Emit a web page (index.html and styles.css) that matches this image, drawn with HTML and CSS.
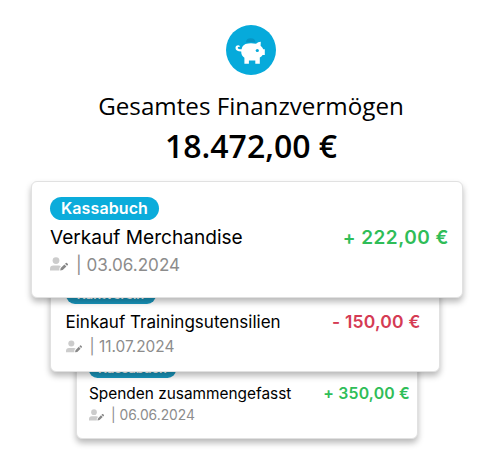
FILE: index.html
```html
<!DOCTYPE html>
<html lang="de">
<head>
<meta charset="utf-8">
<title>Finanzvermögen</title>
<link rel="stylesheet" href="styles.css">
</head>
<body>
<svg class="defs" width="0" height="0" aria-hidden="true">
  <symbol id="user-edit" viewBox="0 0 18 14">
    <circle cx="6" cy="3.6" r="3.4" fill="#ccc"/>
    <path d="M0 13.5v-1.6Q0 8.6 3.4 8.6h5.2q1.4 0 2.3.7L9.4 11v2.5z" fill="#ccc"/>
    <path d="M10.2 13.6l.5-2.5 3.7-3.7 2 2-3.7 3.700zM15 6.800l.9-.9q.5-.4 1 0l1 1q.4.5 0 1l-.9.9z" fill="#888"/>
  </symbol>
</svg>
<main class="overview">
  <svg class="logo" viewBox="0 0 50 50">
    <circle cx="25" cy="25" r="25" fill="#06aadb"/>
    <path d="M20 17.500q0-4.300 4.700-4.300t4.700 4.300q-4.700-1-9.400 0z" fill="#0795c4"/>
    <path d="M19.500 19q5-1.500 10.500-.2 2-2 4.800-2.100l-.2 4.100q2 1.500 2.700 3.500h1.500v5.600h-2.200q-1 1.500-2.800 2.600v6.200h-4.500v-3.300h-6.400v3.300h-4.500v-5.900q-3.200-2-3.200-6.200-5.700-.3-5.700-3.700 0-2.700 2.700-2.700 1.800 0 1.900 1.600-2.600-.3-2.400 1.100.3 1.300 3.900 1.300Q16.200 20.500 19.500 19z" fill="#fff"/>
    <circle cx="31.300" cy="25.500" r="1.600" fill="#06aadb"/>
  </svg>
  <h1 class="title">Gesamtes Finanzvermögen</h1>
  <p class="total">18.472,00 €</p>
  <section class="card card-front">
    <span class="badge">Kassabuch</span>
    <div class="row"><span class="name">Verkauf Merchandise</span><strong class="amount plus">+ 222,00 €</strong></div>
    <div class="meta"><svg class="icon"><use href="#user-edit"/></svg><span class="date">| 03.06.2024</span></div>
  </section>
  <section class="card card-middle">
    <span class="badge">Kantverein</span>
    <div class="row"><span class="name">Einkauf Trainingsutensilien</span><strong class="amount minus">- 150,00 €</strong></div>
    <div class="meta"><svg class="icon"><use href="#user-edit"/></svg><span class="date">| 11.07.2024</span></div>
  </section>
  <section class="card card-back">
    <span class="badge">Kassabuch</span>
    <div class="row"><span class="name">Spenden zusammengefasst</span><strong class="amount plus">+ 350,00 €</strong></div>
    <div class="meta"><svg class="icon"><use href="#user-edit"/></svg><span class="date">| 06.06.2024</span></div>
  </section>
</main>
</body>
</html>
```
FILE: styles.css
```css
* { box-sizing: border-box; }
body { margin: 0; background: #fff; color: #000; font-family: Inter, sans-serif; }
.defs { display: none; }
.overview { display: flex; flex-direction: column; align-items: center; width: 500px; height: 459px; padding-top: 25px; }
.logo { width: 50px; height: 50px; flex: none; margin-left: 2px; }
.title { margin: 14px 0 0 2px; font: 400 24.200px/34px "Open Sans", sans-serif; white-space: nowrap; }
.total { margin: 3px 0 0 2px; font: 600 32px/40px "Open Sans", sans-serif; white-space: nowrap; }
.card { position: relative; flex: none; display: flex; flex-direction: column; align-items: flex-start; background: #fff; border: 1px solid #e1e1e1; border-radius: 6px; box-shadow: 0 4px 6px rgba(0,0,0,.28); white-space: nowrap; }
.card-front { z-index: 3; width: 432px; height: 117px; margin: 15px 6px 0 0; padding: 15px 14px 0 18px; }
.card-middle { z-index: 2; width: 390px; height: 100px; margin: -26px 11px 0 0; padding: 13px 18px 0 15px; }
.card-back { z-index: 1; width: 342px; height: 90px; margin: -23px 6px 0 0; padding: 11px 7px 0 12px; }
.badge { display: flex; align-items: center; justify-content: center; background: #0bacdb; color: #fff; border-radius: 20px; font-weight: 600; }
.row { display: flex; justify-content: space-between; align-items: center; width: 100%; }
.amount { font-weight: 600; }
.plus { color: #2fbd58; }
.minus { color: #d53b54; }
.meta { display: flex; align-items: center; color: #8c8c8c; }
.icon { flex: none; }
.card-front .badge { width: 109px; height: 23px; padding-bottom: 1px; font-size: 16px; letter-spacing: .1px; }
.card-front .row { height: 26px; margin-top: 4px; }
.card-front .name { font-size: 19.100px; }
.card-front .amount { font-size: 19px; letter-spacing: .5px; margin-right: -1px; }
.card-front .meta { margin-top: 2px; height: 24px; font-size: 17.100px; }
.card-front .icon { width: 18px; height: 14px; margin-right: 8px; }
.card-middle .badge { width: 90px; height: 18px; padding-bottom: 2px; background: #1a97bd; font-size: 12.800px; }
.card-middle .row { height: 24px; margin-top: 5px; }
.card-middle .name { font-size: 17.050px; }
.card-middle .amount { font-size: 17.500px; letter-spacing: .2px; }
.card-middle .meta { height: 22px; margin-top: 2px; font-size: 15.400px; }
.card-middle .icon { width: 16px; height: 13px; margin-right: 8px; }
.card-back .badge { width: 87px; height: 17px; padding-bottom: 2px; background: #1a97bd; font-size: 12.800px; }
.card-back .row { height: 22px; margin-top: 4px; }
.card-back .name { font-size: 15.400px; }
.card-back .amount { font-size: 15.800px; letter-spacing: .2px; }
.card-back .meta { height: 20px; margin-top: 1px; font-size: 13.800px; }
.card-back .icon { width: 15px; height: 12px; margin-right: 7px; }
```
